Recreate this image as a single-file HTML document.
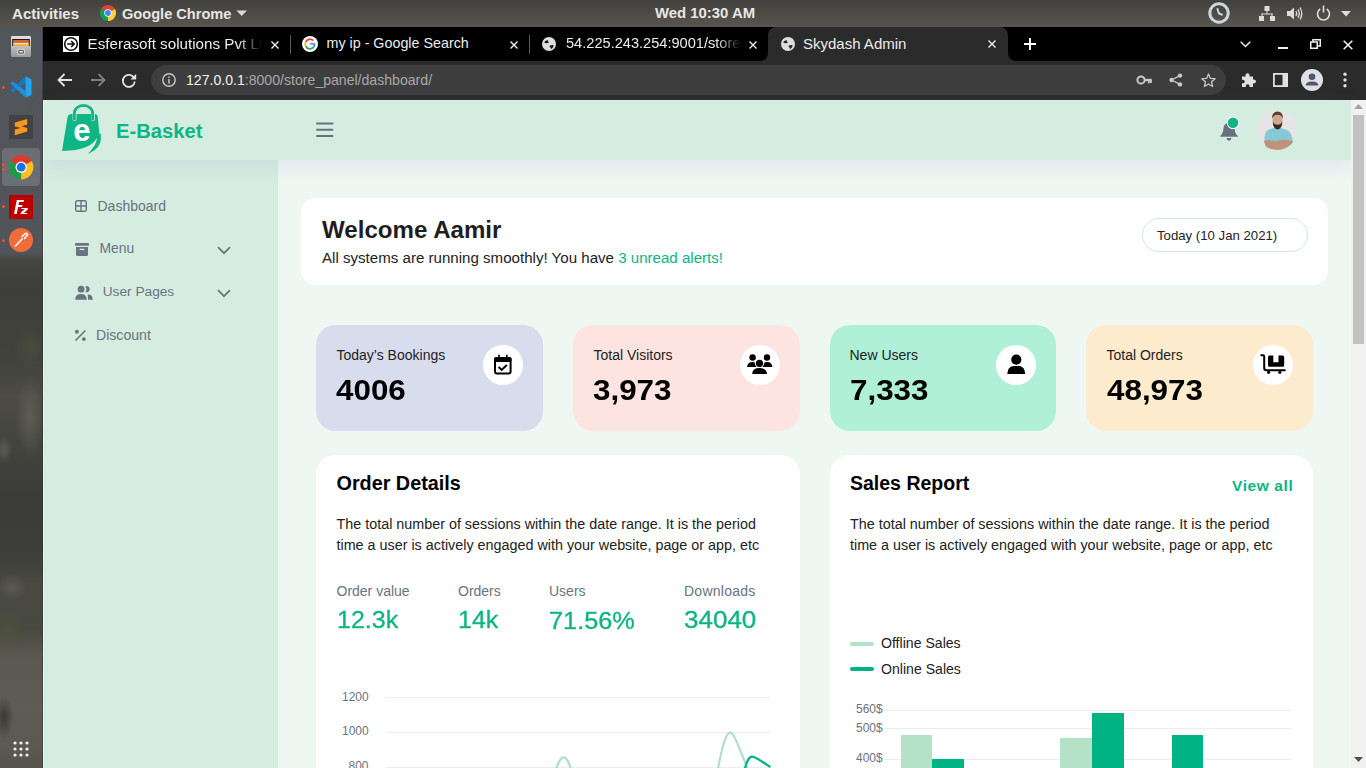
<!DOCTYPE html>
<html><head><meta charset="utf-8">
<style>
*{margin:0;padding:0;box-sizing:border-box}
html,body{width:1366px;height:768px;overflow:hidden;background:#2b2b2b}
body{position:relative;font-family:"Liberation Sans",sans-serif}
.a{position:absolute}
.t{position:absolute;white-space:nowrap;line-height:1}
svg{position:absolute;overflow:visible}
</style></head><body>

<!-- ============ UBUNTU TOP BAR ============ -->
<div class="a" id="topbar" style="left:0;top:0;width:1366px;height:27px;background:linear-gradient(#42413d,#58554e)"></div>
<div class="t" style="left:12px;top:calc(19px - 0.8465em);font-size:15.1px;font-weight:bold;color:#e6e6e6">Activities</div>
<svg style="left:100px;top:5px" width="16" height="16" viewBox="0 0 16 16">
 <path d="M8 8 L14.93 4 A8 8 0 0 0 1.07 4 Z" fill="#db4437"/>
 <path d="M8 8 L1.07 4 A8 8 0 0 0 8 16 Z" fill="#0f9d58"/>
 <path d="M8 8 L8 16 A8 8 0 0 0 14.93 4 Z" fill="#ffcd40"/>
 <circle cx="8" cy="8" r="3.7" fill="#fff"/><circle cx="8" cy="8" r="2.9" fill="#4285f4"/>
</svg>
<div class="t" style="left:122px;top:calc(19px - 0.8465em);font-size:14.6px;font-weight:bold;color:#e6e6e6">Google Chrome</div>
<svg style="left:236px;top:10px" width="12" height="7" viewBox="0 0 12 7"><path d="M0.5 0.5 L11 0.5 L5.75 6 Z" fill="#d8d8d8"/></svg>
<div class="t" style="left:655px;top:calc(18.5px - 0.8465em);font-size:14.9px;font-weight:bold;color:#e6e6e6">Wed 10:30 AM</div>
<!-- tray -->
<svg style="left:1208px;top:2px" width="22" height="22" viewBox="0 0 22 22">
 <circle cx="11" cy="11" r="9.2" fill="none" stroke="#c9d8dc" stroke-width="3"/>
 <path d="M9.3 6.3 L10.8 11.2 L14.6 13" fill="none" stroke="#c9d8dc" stroke-width="2"/>
</svg>
<svg style="left:1259px;top:6px" width="16" height="15" viewBox="0 0 16 15" fill="#dcdcdc">
 <rect x="5.5" y="0" width="5" height="5"/><rect x="7.5" y="5" width="1" height="3"/><rect x="2.5" y="7.5" width="11" height="1"/>
 <rect x="2.5" y="7.5" width="1" height="2.5"/><rect x="12.5" y="7.5" width="1" height="2.5"/>
 <rect x="0" y="10" width="5" height="5"/><rect x="11" y="10" width="5" height="5"/>
</svg>
<svg style="left:1287px;top:6px" width="16" height="15" viewBox="0 0 16 15">
 <path d="M0 5 L3 5 L7 1.5 L7 13.5 L3 10 L0 10 Z" fill="#dcdcdc"/>
 <path d="M9 5 Q10.5 7.5 9 10 M11 3.3 Q13.5 7.5 11 11.7 M13 1.5 Q16.5 7.5 13 13.5" fill="none" stroke="#dcdcdc" stroke-width="1.3"/>
</svg>
<svg style="left:1316px;top:5px" width="15" height="16" viewBox="0 0 15 16">
 <path d="M4.2 4 A6 6 0 1 0 10.8 4" fill="none" stroke="#dcdcdc" stroke-width="1.6"/>
 <rect x="6.7" y="0.5" width="1.6" height="7" fill="#dcdcdc"/>
</svg>
<svg style="left:1341px;top:11px" width="10" height="6" viewBox="0 0 10 6"><path d="M0 0 L10 0 L5 5.5 Z" fill="#dcdcdc"/></svg>

<!-- ============ DOCK ============ -->
<div class="a" id="dock" style="left:0;top:27px;width:43px;height:741px;background:
radial-gradient(ellipse 14px 40px at 30px 390px,rgba(120,118,105,0.45),transparent),
radial-gradient(ellipse 8px 14px at 4px 423px,rgba(130,128,115,0.4),transparent),
radial-gradient(ellipse 16px 20px at 30px 320px,rgba(90,100,70,0.30),transparent),
radial-gradient(ellipse 18px 22px at 8px 600px,rgba(80,90,60,0.45),transparent),
radial-gradient(ellipse 14px 14px at 12px 560px,rgba(120,118,105,0.35),transparent),
radial-gradient(ellipse 10px 22px at 4px 690px,rgba(30,30,28,0.55),transparent),
linear-gradient(#525559 0px,#515458 226px,#45453f 234px,#3e3e3a 260px,#42423d 330px,#4c4b45 370px,#44443f 420px,#3b3b37 470px,#3d3d39 520px,#4a4a43 560px,#474840 600px,#5a5850 630px,#5e5c54 680px,#5b5951 720px,#55534c 741px)"></div>
<div class="a" style="left:42px;top:27px;width:1px;height:741px;background:rgba(30,32,34,0.35)"></div>
<!-- dock icons -->
<svg style="left:11px;top:36px" width="20" height="21" viewBox="0 0 20 21">
 <defs><linearGradient id="fcg" x1="0" y1="0" x2="0" y2="1"><stop offset="0" stop-color="#e2e2e2"/><stop offset="0.5" stop-color="#bdbdbd"/><stop offset="1" stop-color="#999"/></linearGradient></defs>
 <rect x="0" y="0" width="20" height="21" rx="1.2" fill="url(#fcg)"/>
 <rect x="1.2" y="3" width="17.6" height="7" fill="#1c1c1c"/>
 <rect x="2.2" y="4" width="15.6" height="6" fill="#d9642a"/>
 <rect x="2.2" y="6.8" width="15.6" height="3.2" fill="#f3a742"/>
 <rect x="3" y="7.2" width="14" height="1" fill="#fff2e0"/>
 <rect x="6.2" y="12.8" width="7.8" height="6" rx="1" fill="#cfcfcf"/>
 <rect x="7.5" y="14.3" width="5.2" height="3.3" rx="0.6" fill="#333"/><rect x="8.3" y="15" width="3.6" height="1.6" fill="#eee"/>
</svg>
<div class="a" style="left:2.3px;top:85.5px;width:3px;height:3px;border-radius:50%;background:#e95420"></div>
<svg style="left:8px;top:73px" width="28" height="28" viewBox="0 0 28 28">
 <path d="M17.5 3.3 L17.5 10 L4.7 19.7 L2.4 17.2 Z" fill="#1877c0"/>
 <path d="M2.4 10.2 L4.5 8.3 L17.5 18 L17.5 24.6 Z" fill="#1e8fdc"/>
 <path d="M17.5 3.3 L23.5 6.2 L23.5 22 L17.5 24.6 Z" fill="#22a5f1"/>
</svg>
<svg style="left:9px;top:115px" width="24" height="24" viewBox="0 0 24 24">
 <rect width="24" height="24" rx="2" fill="#424242"/>
 <path d="M5.8 7.6 L18.2 4 L18.2 9.6 L12.5 11.2 L18.2 13 L18.2 16.6 L5.8 20.2 L5.8 14.6 L11.5 13 L5.8 11.2 Z" fill="#f7971e"/>
</svg>
<div class="a" style="left:2px;top:148px;width:38px;height:38px;border-radius:4px;background:#6b6e72"></div>
<svg style="left:8.8px;top:154.6px" width="24.4" height="24.4" viewBox="0 0 16 16">
 <path d="M8 8 L14.93 4 A8 8 0 0 0 1.07 4 Z" fill="#dd3a2e"/>
 <path d="M8 8 L1.07 4 A8 8 0 0 0 8 16 Z" fill="#1e9a48"/>
 <path d="M8 8 L8 16 A8 8 0 0 0 14.93 4 Z" fill="#fcc21b"/>
 <circle cx="8" cy="8" r="3.7" fill="#fff"/><circle cx="8" cy="8" r="2.9" fill="#1a73e8"/>
</svg>
<div class="a" style="left:2.2px;top:163px;width:3px;height:3px;border-radius:50%;background:#e95420"></div>
<div class="a" style="left:2.2px;top:168px;width:3px;height:3px;border-radius:50%;background:#e95420"></div>
<svg style="left:9px;top:195px" width="24" height="24" viewBox="0 0 24 24">
 <rect width="24" height="24" fill="#bf0000"/><rect x="1" y="1" width="22" height="22" fill="none" stroke="#8a0000" stroke-width="0.8" stroke-dasharray="1 1"/>
 <path d="M5 19 L7.8 5 L15 5 L14.6 7 L10 7 L9.5 10 L13.5 10 L13.1 12 L9.1 12 L7.7 19 Z" fill="#fff"/>
 <path d="M12.5 13 L19 13 L18.7 14.6 L14.8 18 L18.2 18 L18 19 L11.6 19 L11.9 17.5 L15.8 14 L12.3 14 Z" fill="#fff"/>
</svg>
<div class="a" style="left:2.3px;top:205px;width:3px;height:3px;border-radius:50%;background:#e95420"></div>
<svg style="left:9px;top:228px" width="24" height="24" viewBox="0 0 24 24">
 <circle cx="12" cy="12" r="12" fill="#f26b3a"/>
 <path d="M6 18.5 L13.5 10.5 M12.5 9 L16.5 5.5 Q18.5 5 18.5 7 L15 11" fill="none" stroke="#fff" stroke-width="1.6"/>
</svg>
<div class="a" style="left:2.3px;top:238.5px;width:3px;height:3px;border-radius:50%;background:#e95420"></div>
<svg style="left:13px;top:741px" width="16" height="16" viewBox="0 0 16 16" fill="#f0f0f0">
 <circle cx="2" cy="2" r="1.6"/><circle cx="8" cy="2" r="1.6"/><circle cx="14" cy="2" r="1.6"/>
 <circle cx="2" cy="8" r="1.6"/><circle cx="8" cy="8" r="1.6"/><circle cx="14" cy="8" r="1.6"/>
 <circle cx="2" cy="14" r="1.6"/><circle cx="8" cy="14" r="1.6"/><circle cx="14" cy="14" r="1.6"/>
</svg>


<!-- ============ CHROME ============ -->
<div class="a" style="left:43px;top:27px;width:1323px;height:34px;background:#000"></div>
<div class="a" style="left:43px;top:61px;width:1323px;height:39px;background:#2b2b2b"></div>
<!-- tabs -->
<div class="a" style="left:768px;top:27px;width:240px;height:34px;background:#2b2b2b;border-radius:8px 8px 0 0"></div>
<div class="a" style="left:760px;top:53px;width:8px;height:8px;background:#2b2b2b"></div>
<div class="a" style="left:752px;top:45px;width:16px;height:16px;background:#000;border-radius:0 0 8px 0"></div>
<div class="a" style="left:1008px;top:53px;width:8px;height:8px;background:#2b2b2b"></div>
<div class="a" style="left:1008px;top:45px;width:16px;height:16px;background:#000;border-radius:0 0 0 8px"></div>
<!-- tab1 -->
<svg style="left:63px;top:36px" width="16" height="16" viewBox="0 0 16 16">
 <rect width="16" height="16" fill="#fff"/><circle cx="8" cy="8" r="6.3" fill="none" stroke="#111" stroke-width="1.6"/>
 <path d="M4.2 8 H11 M8.2 5 L11.2 8 L8.2 11" fill="none" stroke="#111" stroke-width="1.6"/>
</svg>
<div class="t" style="left:87.5px;top:calc(48.5px - 0.8465em);font-size:15.2px;color:#ececec;width:174px;overflow:hidden;-webkit-mask-image:linear-gradient(90deg,#000 150px,transparent 174px)">Esferasoft solutions Pvt Ltd</div>
<svg style="left:271px;top:40.5px" width="8" height="8" viewBox="0 0 8 8"><path d="M0.5 0.5 L7.5 7.5 M7.5 0.5 L0.5 7.5" stroke="#f0f0f0" stroke-width="1.4"/></svg>
<div class="a" style="left:290px;top:35px;width:1px;height:19px;background:#5a5a5a"></div>
<!-- tab2 -->
<svg style="left:302px;top:35.5px" width="16" height="16" viewBox="0 0 16 16">
 <circle cx="8" cy="8" r="8" fill="#fff"/>
 <path d="M12.6 8.4 H8.2 V7.1 H12.4" fill="#4285f4"/>
 <path d="M11.2 4.6 A4.6 4.6 0 0 0 3.7 6" fill="none" stroke="#ea4335" stroke-width="1.8"/>
 <path d="M3.7 6 A4.6 4.6 0 0 0 3.7 10" fill="none" stroke="#fbbc05" stroke-width="1.8"/>
 <path d="M3.7 10 A4.6 4.6 0 0 0 11.6 11" fill="none" stroke="#34a853" stroke-width="1.8"/>
 <path d="M11.6 11 A4.6 4.6 0 0 0 12.6 7.8" fill="none" stroke="#4285f4" stroke-width="1.8"/>
</svg>
<div class="t" style="left:326.5px;top:calc(48.3px - 0.8465em);font-size:14.3px;color:#ececec">my ip - Google Search</div>
<svg style="left:510px;top:40.5px" width="8" height="8" viewBox="0 0 8 8"><path d="M0.5 0.5 L7.5 7.5 M7.5 0.5 L0.5 7.5" stroke="#f0f0f0" stroke-width="1.4"/></svg>
<div class="a" style="left:529px;top:35px;width:1px;height:19px;background:#5a5a5a"></div>
<!-- tab3 -->
<svg style="left:542px;top:37px" width="14" height="14" viewBox="0 0 14 14">
 <circle cx="7" cy="7" r="7" fill="#dedede"/>
 <path d="M2.2 5.2 Q3.5 3 6 3.2 Q5.6 4.6 7 5.2 Q5.5 6.8 3.5 6 Q2.8 5.8 2.2 5.2 Z M7.5 9 Q9 7.6 11.5 8 Q11.8 10.2 9.8 11.7 Q8.5 12 8.6 10.5 Q7.6 10 7.5 9 Z" fill="#1a1a1a"/>
</svg>
<div class="t" style="left:566px;top:calc(48.3px - 0.8465em);font-size:14.6px;color:#ececec;width:175px;overflow:hidden;-webkit-mask-image:linear-gradient(90deg,#000 150px,transparent 175px)">54.225.243.254:9001/store_panel</div>
<svg style="left:749px;top:40.5px" width="8" height="8" viewBox="0 0 8 8"><path d="M0.5 0.5 L7.5 7.5 M7.5 0.5 L0.5 7.5" stroke="#f0f0f0" stroke-width="1.4"/></svg>
<!-- active tab -->
<svg style="left:781px;top:37px" width="14" height="14" viewBox="0 0 14 14">
 <circle cx="7" cy="7" r="7" fill="#dedede"/>
 <path d="M2.2 5.2 Q3.5 3 6 3.2 Q5.6 4.6 7 5.2 Q5.5 6.8 3.5 6 Q2.8 5.8 2.2 5.2 Z M7.5 9 Q9 7.6 11.5 8 Q11.8 10.2 9.8 11.7 Q8.5 12 8.6 10.5 Q7.6 10 7.5 9 Z" fill="#2b2b2b"/>
</svg>
<div class="t" style="left:803px;top:calc(48.3px - 0.8465em);font-size:15px;color:#ececec">Skydash Admin</div>
<svg style="left:988px;top:40px" width="8" height="8" viewBox="0 0 8 8"><path d="M0.5 0.5 L7.5 7.5 M7.5 0.5 L0.5 7.5" stroke="#f0f0f0" stroke-width="1.4"/></svg>
<svg style="left:1024px;top:38px" width="12" height="12" viewBox="0 0 12 12"><path d="M6 0 V12 M0 6 H12" stroke="#fff" stroke-width="1.9"/></svg>
<!-- window controls -->
<svg style="left:1240px;top:41px" width="11" height="7" viewBox="0 0 11 7"><path d="M0.7 0.7 L5.5 5.5 L10.3 0.7" fill="none" stroke="#e8e8e8" stroke-width="1.5"/></svg>
<div class="a" style="left:1278px;top:47px;width:10px;height:2px;background:#f0f0f0"></div>
<svg style="left:1310px;top:39px" width="11" height="10" viewBox="0 0 11 10" fill="none" stroke="#f0f0f0" stroke-width="1.5">
 <rect x="0.75" y="3" width="6.5" height="6.25"/><path d="M3 3 V0.75 H10.25 V7 H7.25"/>
</svg>
<svg style="left:1343px;top:39.5px" width="10" height="10" viewBox="0 0 10 10"><path d="M0.7 0.7 L9.3 9.3 M9.3 0.7 L0.7 9.3" stroke="#f0f0f0" stroke-width="1.6"/></svg>

<!-- toolbar -->
<svg style="left:57px;top:73px" width="16" height="14" viewBox="0 0 16 14"><path d="M15 7 H2 M7.5 1 L1.5 7 L7.5 13" fill="none" stroke="#e3e3e3" stroke-width="1.8"/></svg>
<svg style="left:89.5px;top:73px" width="16" height="14" viewBox="0 0 16 14"><path d="M1 7 H14 M8.5 1 L14.5 7 L8.5 13" fill="none" stroke="#7f7f7f" stroke-width="1.8"/></svg>
<svg style="left:121px;top:72.5px" width="16" height="15" viewBox="0 0 16 15">
 <path d="M13.2 5.2 A6 6 0 1 0 13.8 8.5" fill="none" stroke="#e3e3e3" stroke-width="1.8"/>
 <path d="M15.2 0.8 V6.5 H9.5 Z" fill="#e3e3e3"/>
</svg>
<div class="a" style="left:151px;top:65px;width:1075px;height:29.5px;background:#3e3e3e;border-radius:15px"></div>
<svg style="left:162px;top:73px" width="14" height="14" viewBox="0 0 14 14">
 <circle cx="7" cy="7" r="6.2" fill="none" stroke="#c8c8c8" stroke-width="1.4"/><rect x="6.25" y="6" width="1.5" height="4.6" fill="#c8c8c8"/><rect x="6.25" y="3.5" width="1.5" height="1.5" fill="#c8c8c8"/>
</svg>
<div class="t" style="left:186px;top:calc(85.3px - 0.8465em);font-size:14.1px;color:#a8a8a8"><span style="color:#f2f2f2">127.0.0.1</span>:8000/store_panel/dashboard/</div>
<!-- key -->
<svg style="left:1137px;top:75px" width="15" height="10" viewBox="0 0 15 10" fill="#c8c8c8">
 <circle cx="4" cy="5" r="3.6" fill="none" stroke="#c8c8c8" stroke-width="2"/><rect x="7" y="3.8" width="7.8" height="2.4"/><rect x="11" y="5" width="1.8" height="3.3"/><rect x="13" y="5" width="1.8" height="3"/>
</svg>
<!-- share -->
<svg style="left:1169px;top:73px" width="14" height="14" viewBox="0 0 14 14" fill="#c8c8c8">
 <circle cx="11" cy="2.6" r="2.2"/><circle cx="2.6" cy="7" r="2.2"/><circle cx="11" cy="11.4" r="2.2"/>
 <path d="M11 2.6 L2.6 7 L11 11.4" fill="none" stroke="#c8c8c8" stroke-width="1.2"/>
</svg>
<!-- star -->
<svg style="left:1200.5px;top:72.5px" width="15" height="15" viewBox="0 0 15 15">
 <path d="M7.5 1 L9.4 5.4 L14.1 5.7 L10.5 8.8 L11.6 13.5 L7.5 11 L3.4 13.5 L4.5 8.8 L0.9 5.7 L5.6 5.4 Z" fill="none" stroke="#c8c8c8" stroke-width="1.3" stroke-linejoin="round"/>
</svg>
<!-- puzzle -->
<svg style="left:1240.5px;top:73px" width="15" height="14" viewBox="0 0 15 14" fill="#e0e0e0">
 <path d="M1 3.5 H4.5 Q4.2 0.3 6.5 0.3 Q8.8 0.3 8.5 3.5 H12 V6.5 Q15 6.3 15 8.5 Q15 10.7 12 10.5 V14 H8.5 Q8.8 11.3 6.7 11.3 Q4.5 11.3 4.8 14 H1 V10.3 Q3.8 10.6 3.8 8.5 Q3.8 6.4 1 6.7 Z"/>
</svg>
<!-- sidebar icon -->
<svg style="left:1273px;top:73px" width="15" height="14" viewBox="0 0 15 14">
 <rect x="0.9" y="0.9" width="13.2" height="12.2" fill="none" stroke="#e0e0e0" stroke-width="1.8"/><rect x="9.5" y="0.9" width="4.6" height="12.2" fill="#e0e0e0"/>
</svg>
<!-- profile -->
<svg style="left:1301px;top:69px" width="22" height="22" viewBox="0 0 22 22">
 <circle cx="11" cy="11" r="11" fill="#dfe1e5"/>
 <circle cx="11" cy="7.8" r="3.3" fill="#4d5968"/><path d="M4.5 16.5 Q5 12.6 11 12.6 Q17 12.6 17.5 16.5 Z" fill="#4d5968"/>
</svg>
<!-- dots -->
<svg style="left:1342.5px;top:72px" width="4" height="16" viewBox="0 0 4 16" fill="#e0e0e0">
 <circle cx="2" cy="2.2" r="1.7"/><circle cx="2" cy="8" r="1.7"/><circle cx="2" cy="13.8" r="1.7"/>
</svg>


<!-- ============ PAGE ============ -->
<div class="a" style="left:43px;top:100px;width:1308px;height:668px;background:#eef7f2"></div>
<!-- sidebar -->
<div class="a" style="left:43px;top:160px;width:235px;height:608px;background:#d4ede0"></div>
<div class="a" style="left:43px;top:100px;width:1px;height:668px;background:#e2f6eb;z-index:5"></div>
<!-- header -->
<div class="a" style="left:43px;top:100px;width:1308px;height:60px;background:#d4ede0;box-shadow:0 5px 18px rgba(120,105,190,0.13)"></div>
<!-- logo -->
<svg style="left:55px;top:100px" width="55" height="60" viewBox="0 0 55 60">
 <path d="M19.3 20.5 L19.3 13.5 A9.2 8.2 0 0 1 37.7 13.5 L37.7 20.5" fill="none" stroke="#0fb584" stroke-width="2.8"/>
 <path d="M12.5 17.5 Q13 14 16.5 14 L17.5 14 L17.5 20 Q19.5 22.5 21.5 20 L21.5 14 L36 14 L36 20 Q38 22.5 40 20 L40 14 Q42.6 14 42.8 17.5 L44.3 33 C40 45 30 50.5 7 51 Z" fill="#0fb584"/>
 <path d="M45.5 33 C47.5 43 43 50 32.5 54 C40 47 43 40 41.5 36 Z" fill="#0fb584"/>
 <text x="18.3" y="41" font-family="Liberation Sans" font-weight="bold" font-size="31" fill="#fff">e</text>
</svg>
<div class="t" style="left:116px;top:calc(137.6px - 0.8465em);font-size:20.2px;font-weight:bold;color:#0fb584">E-Basket</div>
<!-- hamburger -->
<svg style="left:316px;top:122px" width="18" height="16" viewBox="0 0 18 16" fill="#667080">
 <rect x="0" y="0.6" width="17.5" height="2" rx="1"/><rect x="0" y="6.8" width="17.5" height="2" rx="1"/><rect x="0" y="13" width="17.5" height="2" rx="1"/>
</svg>
<!-- bell -->
<svg style="left:1219px;top:121px" width="21" height="21" viewBox="0 0 21 21">
 <path d="M1.2 15.8 Q1.4 14.6 2.8 13.2 Q4.2 11.6 4.4 8 Q4.6 2 10 1.8 Q15.4 2 15.6 8 Q15.8 11.6 17.2 13.2 Q18.7 14.6 18.9 15.8 Z" fill="#667080"/>
 <path d="M7.6 17.1 L12.5 17.1 Q12 19.8 10 19.8 Q8 19.8 7.6 17.1 Z" fill="#667080"/>
 <circle cx="14" cy="1.8" r="6.3" fill="#fff"/><circle cx="14" cy="1.8" r="5.3" fill="#0cb582"/>
</svg>
<!-- avatar -->
<svg style="left:1257px;top:110px" width="40" height="40" viewBox="0 0 40 40">
 <defs><clipPath id="avc"><circle cx="20" cy="20" r="20"/></clipPath></defs>
 <circle cx="20" cy="20" r="20" fill="#e5e5e5"/>
 <g clip-path="url(#avc)">
  <path d="M7.5 32 Q7 22 11 20 Q15 18.3 18 17.5 L22 17.5 Q25 18.3 30 20 Q35 22 35.8 32 Z" fill="#85c8d6"/>
  <path d="M7 31 Q12 29 18 31.5 Q24 29 30 30 Q35 30.5 36.5 32 L35 37 Q30 40.5 22 40 L12 39.5 Q8 37 7 31 Z" fill="#bf9379"/>
  <path d="M15.5 10.5 Q15.3 3.5 20.5 3.5 Q25.7 3.5 25.5 10.5 Q25.5 16.5 20.5 17.5 Q15.5 16.5 15.5 10.5 Z" fill="#cfa68e"/>
  <path d="M15.8 11.5 Q15.8 18.5 20.5 19.5 Q25.3 18.5 25.3 11.5 Q24 14.8 20.5 14.8 Q17 14.8 15.8 11.5 Z" fill="#3e2c24"/>
  <path d="M15 9 Q14.8 1.5 20.5 1.5 Q26.2 1.5 26 9 Q25 5 20.5 4.8 Q16 5 15 9 Z" fill="#5a4030"/>
 </g>
</svg>

<!-- sidebar menu -->
<svg style="left:75px;top:200px" width="12" height="12" viewBox="0 0 12 12" fill="none" stroke="#6b7280" stroke-width="1.4">
 <rect x="0.7" y="0.7" width="10.6" height="10.6" rx="1.6"/><path d="M6 0.7 V11.3 M0.7 6 H11.3"/>
</svg>
<div class="t" style="left:97.5px;top:calc(210.5px - 0.8465em);font-size:14px;color:#6b7280">Dashboard</div>
<svg style="left:75px;top:243px" width="14" height="13" viewBox="0 0 14 13" fill="#6b7280">
 <rect x="0" y="0" width="14" height="2.8" rx="0.8"/><path d="M1 4 H13 V11.5 Q13 13 11.5 13 H2.5 Q1 13 1 11.5 Z"/>
 <rect x="4.5" y="5.8" width="5" height="1.3" rx="0.6" fill="#d4ede0"/>
</svg>
<div class="t" style="left:99.4px;top:calc(254px - 0.8465em);font-size:13.9px;color:#6b7280">Menu</div>
<svg style="left:217px;top:246px" width="14" height="9" viewBox="0 0 14 9"><path d="M1 1.2 L7 7.2 L13 1.2" fill="none" stroke="#6b7280" stroke-width="1.7"/></svg>
<svg style="left:75px;top:285px" width="18" height="15" viewBox="0 0 18 15" fill="#6b7280">
 <circle cx="6.1" cy="4.2" r="3.4"/><path d="M10.3 1.4 A3.1 3.1 0 1 1 10.3 7 A4.5 4.5 0 0 0 10.3 1.4 Z"/>
 <path d="M0.2 14.8 Q0.2 9 6 9 Q11.8 9 11.8 14.8 Z"/><path d="M12.8 9.3 Q17.7 9.6 17.8 14.8 L13 14.8 Q13 11.5 12.8 9.3 Z"/>
</svg>
<div class="t" style="left:102.7px;top:calc(297px - 0.8465em);font-size:13.7px;color:#6b7280">User Pages</div>
<svg style="left:217px;top:289px" width="14" height="9" viewBox="0 0 14 9"><path d="M1 1.2 L7 7.2 L13 1.2" fill="none" stroke="#6b7280" stroke-width="1.7"/></svg>
<svg style="left:74px;top:329px" width="13" height="13" viewBox="0 0 13 13" fill="#6b7280">
 <circle cx="2.9" cy="2.75" r="1.9"/><circle cx="9.9" cy="10.1" r="1.9"/><path d="M1.5 11.5 L11.4 1.5" stroke="#6b7280" stroke-width="1.6"/>
</svg>
<div class="t" style="left:96px;top:calc(340px - 0.8465em);font-size:14.1px;color:#6b7280">Discount</div>

<!-- welcome card -->
<div class="a" style="left:301px;top:198px;width:1027px;height:87px;background:#fff;border-radius:15px"></div>
<div class="t" style="left:322px;top:calc(238.5px - 0.8465em);font-size:24.1px;font-weight:bold;color:#1e1e1e">Welcome Aamir</div>
<div class="t" style="left:322px;top:calc(262.3px - 0.8465em);font-size:15.1px;color:#222">All systems are running smoothly! You have <span style="color:#0cb582">3 unread alerts!</span></div>
<div class="a" style="left:1142px;top:218px;width:166px;height:34px;border:1px solid #cfe9dc;border-radius:17px"></div>
<div class="t" style="left:1157px;top:calc(240.4px - 0.8465em);font-size:13.2px;color:#222">Today (10 Jan 2021)</div>

<!-- stat cards -->
<div class="a" style="left:316px;top:325px;width:227px;height:106px;background:#d8ddee;border-radius:20px"></div>
<div class="a" style="left:573px;top:325px;width:227px;height:106px;background:#fde4e0;border-radius:20px"></div>
<div class="a" style="left:830px;top:325px;width:226px;height:106px;background:#b1f0d8;border-radius:20px"></div>
<div class="a" style="left:1086px;top:325px;width:227px;height:106px;background:#fcebcd;border-radius:20px"></div>

<div class="t" style="left:336.5px;top:calc(359.5px - 0.8465em);font-size:14px;color:#222">Today’s Bookings</div>
<div class="t" style="left:593.5px;top:calc(359.5px - 0.8465em);font-size:14px;color:#222">Total Visitors</div>
<div class="t" style="left:849.5px;top:calc(359.5px - 0.8465em);font-size:14px;color:#222">New Users</div>
<div class="t" style="left:1106.5px;top:calc(359.5px - 0.8465em);font-size:14px;color:#222">Total Orders</div>

<div class="t" style="left:336px;top:calc(400.6px - 0.8465em);font-size:29.2px;font-weight:bold;color:#000;transform:scaleX(1.075);transform-origin:0 0">4006</div>
<div class="t" style="left:593px;top:calc(400.6px - 0.8465em);font-size:29.2px;font-weight:bold;color:#000;transform:scaleX(1.075);transform-origin:0 0">3,973</div>
<div class="t" style="left:849.5px;top:calc(400.6px - 0.8465em);font-size:29.2px;font-weight:bold;color:#000;transform:scaleX(1.075);transform-origin:0 0">7,333</div>
<div class="t" style="left:1106.5px;top:calc(400.6px - 0.8465em);font-size:29.2px;font-weight:bold;color:#000;transform:scaleX(1.075);transform-origin:0 0">48,973</div>

<!-- icon circles -->
<svg style="left:483px;top:345px" width="40" height="40" viewBox="0 0 40 40">
 <circle cx="20" cy="20" r="20" fill="#fff"/>
 <rect x="12" y="13" width="15.6" height="15.6" rx="2" fill="none" stroke="#000" stroke-width="2"/>
 <rect x="11" y="12" width="17.6" height="5" rx="2" fill="#000"/>
 <rect x="15.2" y="9.4" width="1.6" height="3.5" rx="0.8" fill="#000"/><rect x="23" y="9.4" width="1.6" height="3.5" rx="0.8" fill="#000"/>
 <path d="M15.6 22 L18.7 25 L23.8 20" fill="none" stroke="#000" stroke-width="1.9"/>
</svg>
<svg style="left:740px;top:345px" width="40" height="40" viewBox="0 0 40 40">
 <circle cx="20" cy="20" r="20" fill="#fff"/>
 <circle cx="12.6" cy="12.5" r="3.2" fill="#000"/><circle cx="27" cy="12.5" r="3.2" fill="#000"/>
 <path d="M7 21.9 Q7.5 17 12.5 17 Q16.5 17 17.5 21.9 Z" fill="#000"/><path d="M22 21.9 Q23 17 27 17 Q32 17 32.3 21.9 Z" fill="#000"/>
 <circle cx="19.5" cy="18.3" r="4.6" fill="#fff"/><circle cx="19.5" cy="18.3" r="3.6" fill="#000"/>
 <path d="M11 30 Q11 22 19.5 22 Q28 22 28 30 Z" fill="#fff"/>
 <path d="M12.2 28.9 Q12.5 23 19.5 23 Q26.5 23 27 28.9 Z" fill="#000"/>
</svg>
<svg style="left:996px;top:345px" width="40" height="40" viewBox="0 0 40 40">
 <circle cx="20" cy="20" r="20" fill="#fff"/>
 <circle cx="20.3" cy="14.7" r="5.1" fill="#000"/>
 <path d="M11.2 28.9 Q11.8 21.1 18 21.1 L22.6 21.1 Q28.8 21.1 29.2 28.9 Z" fill="#000"/>
</svg>
<svg style="left:1253px;top:345px" width="40" height="40" viewBox="0 0 40 40">
 <circle cx="20" cy="20" r="20" fill="#fff"/>
 <path d="M8.3 10.2 L10 10.2 Q11.2 10.2 11.2 11.5 L11.2 23 Q11.2 25.3 13.5 25.3 L31.8 25.3" fill="none" stroke="#000" stroke-width="2" stroke-linecap="round"/>
 <circle cx="15.6" cy="27.3" r="1.6" fill="#000"/><circle cx="26.8" cy="27.3" r="1.6" fill="#000"/>
 <path d="M16.5 10.6 L20.3 10.6 L20.3 17.2 L25.5 17.2 L25.5 10.6 L29.6 10.6 Q31.2 10.6 31.2 12.2 L31.2 20.2 Q31.2 21.8 29.6 21.8 L16.5 21.8 Q15 21.8 15 20.2 L15 12.2 Q15 10.6 16.5 10.6 Z" fill="#000"/>
</svg>

<!-- order details card -->
<div class="a" style="left:316px;top:455px;width:484px;height:340px;background:#fff;border-radius:20px"></div>
<div class="t" style="left:336.5px;top:calc(490.8px - 0.8465em);font-size:19.8px;font-weight:bold;color:#000">Order Details</div>
<div class="t" style="left:336.5px;top:calc(529.2px - 0.8465em);font-size:14.35px;color:#222">The total number of sessions within the date range. It is the period</div>
<div class="t" style="left:336.5px;top:calc(550.2px - 0.8465em);font-size:14.35px;color:#222">time a user is actively engaged with your website, page or app, etc</div>
<div class="t" style="left:336.5px;top:calc(595.6px - 0.8465em);font-size:14px;color:#6b7280">Order value</div>
<div class="t" style="left:458px;top:calc(595.6px - 0.8465em);font-size:14px;color:#6b7280">Orders</div>
<div class="t" style="left:549px;top:calc(595.6px - 0.8465em);font-size:14px;color:#6b7280">Users</div>
<div class="t" style="left:684px;top:calc(595.6px - 0.8465em);font-size:14px;letter-spacing:0.25px;color:#6b7280">Downloads</div>
<div class="t" style="left:336.5px;top:calc(629px - 0.8465em);font-size:23.5px;transform:scaleX(1.064);transform-origin:0 0;color:#0cb582;-webkit-text-stroke:0.3px #0cb582">12.3k</div>
<div class="t" style="left:458px;top:calc(629px - 0.8465em);font-size:23.5px;transform:scaleX(1.064);transform-origin:0 0;color:#0cb582;-webkit-text-stroke:0.3px #0cb582">14k</div>
<div class="t" style="left:549px;top:calc(629px - 0.8465em);font-size:23.8px;transform:scaleX(1.063);transform-origin:0 0;color:#0cb582;-webkit-text-stroke:0.3px #0cb582">71.56%</div>
<div class="t" style="left:684px;top:calc(629px - 0.8465em);font-size:24.4px;transform:scaleX(1.066);transform-origin:0 0;color:#0cb582;-webkit-text-stroke:0.3px #0cb582">34040</div>
<!-- line chart -->
<div class="t" style="left:342px;top:calc(701.2px - 0.8465em);font-size:12px;color:#6b7280">1200</div>
<div class="t" style="left:342px;top:calc(735.2px - 0.8465em);font-size:12px;color:#6b7280">1000</div>
<div class="t" style="left:348.5px;top:calc(770.2px - 0.8465em);font-size:12px;color:#6b7280">800</div>
<div class="a" style="left:386px;top:697px;width:384px;height:1px;background:#ececec"></div>
<div class="a" style="left:386px;top:732px;width:384px;height:1px;background:#ececec"></div>
<div class="a" style="left:386px;top:767px;width:384px;height:1px;background:#ececec"></div>
<svg style="left:0;top:0" width="1366" height="768" viewBox="0 0 1366 768">
 <path d="M555 772 C559 760 561 757.3 563.7 757.3 C566.4 757.3 568 760 572 772" fill="none" stroke="#a8dfc3" stroke-width="2"/>
 <path d="M716 780 C722 745 726 732.6 730.2 732.6 C734 732.6 738 745 750 775" fill="none" stroke="#a8dfc3" stroke-width="2"/>
 <path d="M744 772 C747 760 749 756.6 752 756.6 C756 756.6 762 762 770.5 767" fill="none" stroke="#00b386" stroke-width="2.2"/>
</svg>

<!-- sales report card -->
<div class="a" style="left:830px;top:455px;width:483px;height:340px;background:#fff;border-radius:20px"></div>
<div class="t" style="left:850px;top:calc(490.8px - 0.8465em);font-size:19.5px;font-weight:bold;color:#000">Sales Report</div>
<div class="t" style="left:1232px;top:calc(490.7px - 0.8465em);font-size:15.5px;font-weight:bold;letter-spacing:0.6px;color:#0cb582">View all</div>
<div class="t" style="left:850px;top:calc(529.2px - 0.8465em);font-size:14.35px;color:#222">The total number of sessions within the date range. It is the period</div>
<div class="t" style="left:850px;top:calc(550.2px - 0.8465em);font-size:14.35px;color:#222">time a user is actively engaged with your website, page or app, etc</div>
<div class="a" style="left:850px;top:642px;width:24px;height:4px;border-radius:2px;background:#b3e2c9"></div>
<div class="t" style="left:881px;top:calc(648px - 0.8465em);font-size:14.1px;color:#222">Offline Sales</div>
<div class="a" style="left:850px;top:667px;width:24px;height:4px;border-radius:2px;background:#00b385"></div>
<div class="t" style="left:881px;top:calc(674px - 0.8465em);font-size:14.1px;color:#222">Online Sales</div>
<div class="t" style="left:856px;top:calc(713px - 0.8465em);font-size:12px;color:#6b7280">560$</div>
<div class="t" style="left:856px;top:calc(732px - 0.8465em);font-size:12px;color:#6b7280">500$</div>
<div class="t" style="left:856px;top:calc(762.5px - 0.8465em);font-size:12px;color:#6b7280">400$</div>
<div class="a" style="left:884px;top:710px;width:407px;height:1px;background:#ececec"></div>
<div class="a" style="left:884px;top:728px;width:407px;height:1px;background:#ececec"></div>
<div class="a" style="left:884px;top:759px;width:407px;height:1px;background:#ececec"></div>
<div class="a" style="left:901px;top:735px;width:31px;height:40px;background:#b3e2c9"></div>
<div class="a" style="left:932px;top:759px;width:32px;height:20px;background:#00b385"></div>
<div class="a" style="left:1060px;top:738px;width:31.5px;height:40px;background:#b3e2c9"></div>
<div class="a" style="left:1091.5px;top:713px;width:32px;height:60px;background:#00b385"></div>
<div class="a" style="left:1171.5px;top:735px;width:31.5px;height:40px;background:#00b385"></div>

<!-- scrollbar -->
<div class="a" style="left:1351px;top:100px;width:15px;height:668px;background:#f1f1f1"></div>
<div class="a" style="left:1353px;top:115px;width:11px;height:229px;background:#c1c1c1"></div>
<svg style="left:1354px;top:104px" width="9" height="6" viewBox="0 0 9 6"><path d="M0 5 L9 5 L4.5 0 Z" fill="#a3a3a3"/></svg>
<svg style="left:1354px;top:757px" width="9" height="6" viewBox="0 0 9 6"><path d="M0 0 L9 0 L4.5 5 Z" fill="#505050"/></svg>

</body></html>
